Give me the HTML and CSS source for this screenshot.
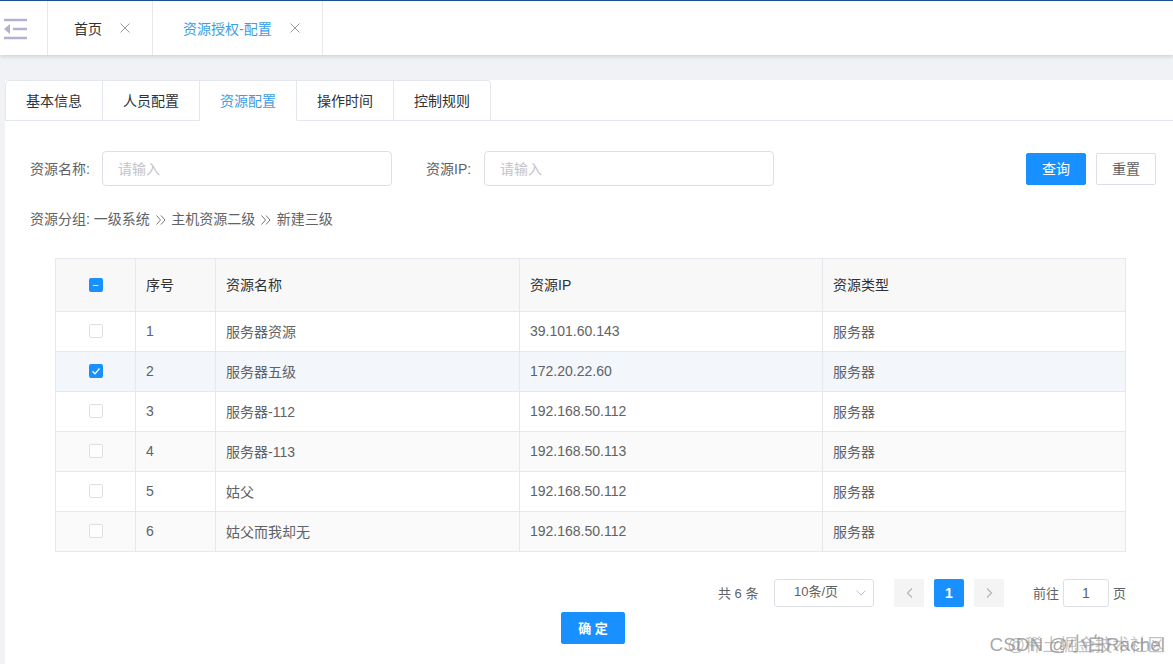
FILE: index.html
```html
<!DOCTYPE html>
<html lang="zh">
<head>
<meta charset="utf-8">
<title>资源授权-配置</title>
<link rel="stylesheet" href="styles.css">
</head>
<body>
<header class="topbar">
  <div class="menu-toggle">
    <svg width="28" height="22" viewBox="0 0 28 22"><path d="M3 2H26M12 11H26M3 20H26" stroke="#b4b2d0" stroke-width="2.4" fill="none"/><path d="M9 6V16L3 11Z" fill="#b4b2d0"/></svg>
  </div>
  <div class="page-tab"><span>首页</span><svg class="close" width="10" height="10" viewBox="0 0 10 10"><path d="M.5.5 9.5 9.5M9.5.5.5 9.5" stroke="#9a9a9a" fill="none"/></svg></div>
  <div class="page-tab active wide"><span>资源授权-配置</span><svg class="close" width="10" height="10" viewBox="0 0 10 10"><path d="M.5.5 9.5 9.5M9.5.5.5 9.5" stroke="#9a9a9a" fill="none"/></svg></div>
</header>
<main class="main">
  <div class="panel">
    <nav class="tabs">
      <div class="tab">基本信息</div>
      <div class="tab">人员配置</div>
      <div class="tab current">资源配置</div>
      <div class="tab">操作时间</div>
      <div class="tab">控制规则</div>
    </nav>
    <section class="filters">
      <label class="field"><span class="field-label">资源名称:</span><input class="input first" placeholder="请输入"></label>
      <label class="field second"><span class="field-label">资源IP:</span><input class="input" placeholder="请输入"></label>
      <div class="actions">
        <button class="btn primary">查询</button>
        <button class="btn plain">重置</button>
      </div>
    </section>
    <p class="crumbs">资源分组: 一级系统<svg class="sep" width="10" height="10" viewBox="0 0 10 10"><path d="M.5.5 4.5 5 .5 9.5M5 .5 9 5 5 9.5" stroke="#777" fill="none"/></svg>主机资源二级<svg class="sep" width="10" height="10" viewBox="0 0 10 10"><path d="M.5.5 4.5 5 .5 9.5M5 .5 9 5 5 9.5" stroke="#777" fill="none"/></svg>新建三级</p>
    <table class="grid">
      <colgroup><col class="c1"><col class="c2"><col class="c3"><col class="c4"><col class="c5"></colgroup>
      <thead>
        <tr><th class="check"><span class="box on">−</span></th><th>序号</th><th>资源名称</th><th>资源IP</th><th>资源类型</th></tr>
      </thead>
      <tbody>
        <tr><td class="check"><span class="box"></span></td><td>1</td><td>服务器资源</td><td>39.101.60.143</td><td>服务器</td></tr>
        <tr class="selected"><td class="check"><span class="box on"><svg width="14" height="14" viewBox="0 0 14 14"><path d="M3.5 7.3 6 9.8 10.5 4.5" stroke="#fff" stroke-width="1.3" fill="none"/></svg></span></td><td>2</td><td>服务器五级</td><td>172.20.22.60</td><td>服务器</td></tr>
        <tr><td class="check"><span class="box"></span></td><td>3</td><td>服务器-112</td><td>192.168.50.112</td><td>服务器</td></tr>
        <tr class="striped"><td class="check"><span class="box"></span></td><td>4</td><td>服务器-113</td><td>192.168.50.113</td><td>服务器</td></tr>
        <tr><td class="check"><span class="box"></span></td><td>5</td><td>姑父</td><td>192.168.50.112</td><td>服务器</td></tr>
        <tr class="striped"><td class="check"><span class="box"></span></td><td>6</td><td>姑父而我却无</td><td>192.168.50.112</td><td>服务器</td></tr>
      </tbody>
    </table>
    <div class="pager">
      <span class="total">共 6 条</span>
      <div class="size">10条/页<svg class="caret" width="10" height="6" viewBox="0 0 10 6"><path d="M.5.5 5 5 9.5.5" stroke="#c0c4cc" fill="none"/></svg></div>
      <div class="nav-btn"><svg width="7" height="10" viewBox="0 0 7 10"><path d="M6 .5 1.5 5 6 9.5" stroke="#b4b7bd" stroke-width="1.3" fill="none"/></svg></div>
      <div class="page-num">1</div>
      <div class="nav-btn"><svg width="7" height="10" viewBox="0 0 7 10"><path d="M1 .5 5.5 5 1 9.5" stroke="#b4b7bd" stroke-width="1.3" fill="none"/></svg></div>
      <span class="goto">前往</span>
      <div class="jump">1</div>
      <span class="unit">页</span>
    </div>
    <div class="confirm-row"><button class="btn primary confirm">确 定</button></div>
  </div>
</main>
<div class="watermark"><span>CSDN @小白Rachel</span><span class="over">@稀土掘金技术社区</span></div>
</body>
</html>
```
FILE: styles.css
```css
* { box-sizing: border-box; }
html, body { margin: 0; height: 664px; overflow: hidden; }
body {
  font-family: "Liberation Sans", "Noto Sans CJK SC", sans-serif;
  font-size: 14px;
  color: #606266;
  background: #f0f2f5;
  position: relative;
}
.topbar {
  height: 55px;
  background: #fff;
  border-top: 1px solid #1d4f91;
  display: flex;
  box-shadow: 0 1px 5px rgba(0, 0, 0, .18);
}
.menu-toggle {
  width: 48px;
  border-right: 1px solid #e8e8e8;
  padding: 17px 0 0 1px;
  height: 54px;
}
.menu-toggle svg { display: block; }
.page-tab {
  width: 105px;
  height: 54px;
  padding-left: 26px;
  border-right: 1px solid #e8e8e8;
  display: flex;
  align-items: center;
  color: #303133;
}
.page-tab span { width: 46px; }
.page-tab.wide { width: 170px; padding-left: 30px; }
.page-tab.wide span { width: 107px; }
.page-tab.active { color: #3a9ee4; }
.main { padding: 25px 0 0 5px; }
.panel { background: #fff; height: 584px; }
.tabs {
  display: flex;
  height: 41px;
  border-bottom: 1px solid #e4e7ed;
}
.tab {
  width: 97px;
  height: 41px;
  padding-bottom: 2px;
  border: 1px solid #e4e7ed;
  border-left: 0;
  background: #fff;
  color: #303133;
  display: flex;
  align-items: center;
  justify-content: center;
}
.tab:first-child { width: 98px; border-left: 1px solid #e4e7ed; border-top-left-radius: 4px; }
.tab:last-child { border-top-right-radius: 4px; }
.tab.current { color: #3a9ee4; border-bottom-color: #fff; }
.filters {
  display: flex;
  align-items: center;
  height: 35px;
  margin-top: 30px;
  padding: 0 17px 0 25px;
}
.field { display: flex; align-items: center; }
.field-label { color: #606266; white-space: nowrap; width: 72px; padding-bottom: 2px; }
.field.second { margin-left: 34px; }
.field.second .field-label { width: 58px; }
.input {
  width: 290px;
  height: 35px;
  border: 1px solid #dcdfe6;
  border-radius: 4px;
  padding: 0 15px;
  font: inherit;
  outline: 0;
}
.input::placeholder { color: #c0c4cc; opacity: 1; }
.actions { margin-left: auto; display: flex; gap: 10px; }
.btn {
  height: 32px;
  width: 60px;
  padding: 0 0 2px;
  font: inherit;
  border-radius: 2px;
  border: 1px solid #dcdfe6;
  background: #fff;
  color: #606266;
}
.btn.primary { background: #1890ff; border-color: #1890ff; color: #fff; }
.crumbs { margin: 25px 0 0 25px; line-height: 16px; color: #606266; }
.sep { margin: 0 5.5px 0 6px; vertical-align: -1px; }
.grid {
  border-collapse: collapse;
  table-layout: fixed;
  width: 1071px;
  margin: 31px 0 0 50px;
}
.c1, .c2 { width: 80px; }
.c3 { width: 304px; }
.c4, .c5 { width: 303px; }
.grid th, .grid td {
  border: 1px solid #e6e8ee;
  padding: 0 10px 2px;
  text-align: left;
  font-weight: 400;
}
.grid th { height: 53px; background: #f8f8f8; color: #303133; }
.grid td { height: 40px; }
.grid .check { text-align: center; padding: 0 0 4px; }
.grid th.check { padding-bottom: 2px; }
.grid .selected td { background: #f3f6fb; }
.grid .striped td { background: #fafafa; }
.box {
  display: inline-flex;
  align-items: center;
  justify-content: center;
  vertical-align: middle;
  width: 14px;
  height: 14px;
  border: 1px solid #dcdfe6;
  border-radius: 2px;
  background: #fff;
}
.box.on {
  background: #1890ff;
  border: 0;
  color: #fff;
  font-size: 11px;
  line-height: 14px;
}
.pager {
  display: flex;
  align-items: center;
  height: 28px;
  margin: 27px 0 0 713px;
  font-size: 13px;
}
.total { width: 56px; padding-bottom: 2px; }
.size {
  position: relative;
  width: 100px;
  height: 28px;
  border: 1px solid #dcdfe6;
  border-radius: 3px;
  line-height: 24px;
  padding-left: 19px;
}
.caret { position: absolute; right: 7px; top: 10px; }
.nav-btn {
  width: 30px;
  height: 28px;
  background: #f4f4f5;
  display: flex;
  align-items: center;
  justify-content: center;
  margin-left: 20px;
}
.nav-btn + .page-num { margin-left: 10px; }
.page-num {
  width: 30px;
  height: 28px;
  border-radius: 2px;
  background: #1890ff;
  color: #fff;
  font-size: 14px;
  font-weight: 700;
  display: flex;
  align-items: center;
  justify-content: center;
}
.page-num + .nav-btn { margin-left: 10px; }
.goto { margin-left: 29px; padding-bottom: 2px; }
.unit { padding-bottom: 2px; }
.jump {
  width: 46px;
  height: 28px;
  border: 1px solid #dcdfe6;
  border-radius: 3px;
  margin: 0 4px;
  font-size: 14px;
  text-align: center;
  line-height: 26px;
}
.confirm-row { display: flex; justify-content: center; margin: 5px 0 0 8px; }
.btn.confirm { width: 64px; font-size: 13px; font-weight: 700; }
.watermark {
  position: absolute;
  right: 8px;
  bottom: 9px;
  width: 178px;
  height: 20px;
  line-height: 20px;
  white-space: nowrap;
}
.watermark span { position: absolute; right: 0; top: 0; font-size: 19px; color: rgba(130, 130, 130, .7); }
.watermark .over { font-size: 17.5px; color: rgba(140, 140, 140, .55); }
```
